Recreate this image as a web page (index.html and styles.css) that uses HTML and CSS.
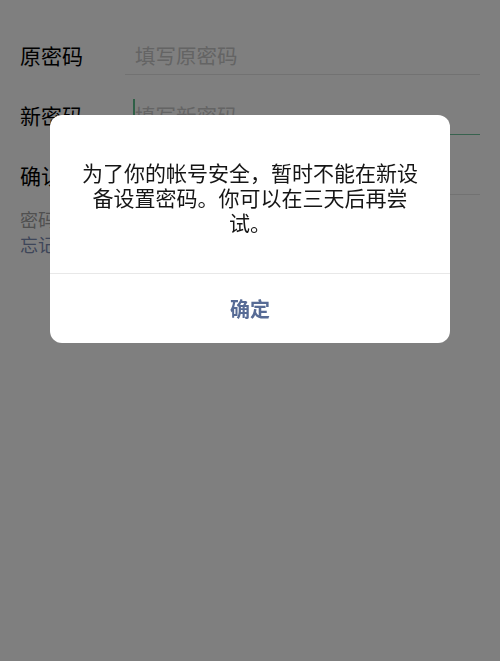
FILE: index.html
```html
<!DOCTYPE html>
<html lang="zh-CN">
<head>
<meta charset="utf-8">
<title>设置密码</title>
<link rel="stylesheet" href="styles.css">
</head>
<body>
<main class="page">
  <div class="row">
    <div class="label">原密码</div>
    <div class="field"><span class="placeholder">填写原密码</span></div>
  </div>
  <div class="row">
    <div class="label">新密码</div>
    <div class="field active"><span class="cursor"></span><span class="placeholder">填写新密码</span></div>
  </div>
  <div class="row">
    <div class="label">确认密码</div>
    <div class="field"><span class="placeholder">再次填写确认</span></div>
  </div>
  <div class="hint">
    <p class="hint-text">密码必须是8-16位的数字、字符组合</p>
    <p class="hint-link">忘记原密码？</p>
  </div>
</main>
<div class="mask"></div>
<div class="dialog" role="dialog">
  <div class="dialog-body">为了你的帐号安全，暂时不能在新设备设置密码。你可以在三天后再尝试。</div>
  <div class="dialog-footer"><span class="dialog-btn">确定</span></div>
</div>
</body>
</html>
```
FILE: styles.css
```css
html, body {
  margin: 0;
  padding: 0;
  background: #ffffff;
  font-family: "Noto Sans CJK SC", "Noto Sans", sans-serif;
}

.page {
  padding-top: 15px;
  height: 646px;
  overflow: hidden;
}

.row {
  display: grid;
  grid-template-columns: 105px 1fr;
  padding: 0 20px;
}

.label {
  padding-top: 28px;
  line-height: 24px;
  font-size: 21px;
  color: #000000;
  white-space: nowrap;
}

.field {
  padding: 28px 0 7px 10px;
  line-height: 24px;
  font-size: 20.5px;
  border-bottom: 1px solid #e5e5e5;
  white-space: nowrap;
}

.field.active {
  border-bottom-color: #6fc49c;
  padding-left: 8px;
}

.placeholder {
  color: #c8c8c8;
}

.cursor {
  display: inline-block;
  width: 2px;
  height: 22px;
  background: #5fc08f;
  vertical-align: -3px;
  position: relative;
  top: -6px;
}

.hint {
  padding: 12px 20px 0;
  font-size: 18px;
  line-height: 25px;
}

.hint p {
  margin: 0;
}

.hint-text {
  color: #a0a0a0;
}

.hint-link {
  color: #7d8cb3;
}

.mask {
  position: fixed;
  inset: 0;
  background: rgba(0, 0, 0, 0.5);
}

.dialog {
  position: fixed;
  left: 50px;
  top: 115px;
  width: 400px;
  background: #ffffff;
  border-radius: 12px;
  overflow: hidden;
}

.dialog-body {
  padding: 44.5px 24px 38.5px;
  font-size: 21px;
  line-height: 25px;
  color: #151515;
  text-align: center;
}

.dialog-footer {
  border-top: 1px solid #e8e8e8;
  height: 69px;
  display: flex;
  align-items: center;
  justify-content: center;
}

.dialog-btn {
  font-size: 20px;
  font-weight: 600;
  color: #576b95;
}
```
